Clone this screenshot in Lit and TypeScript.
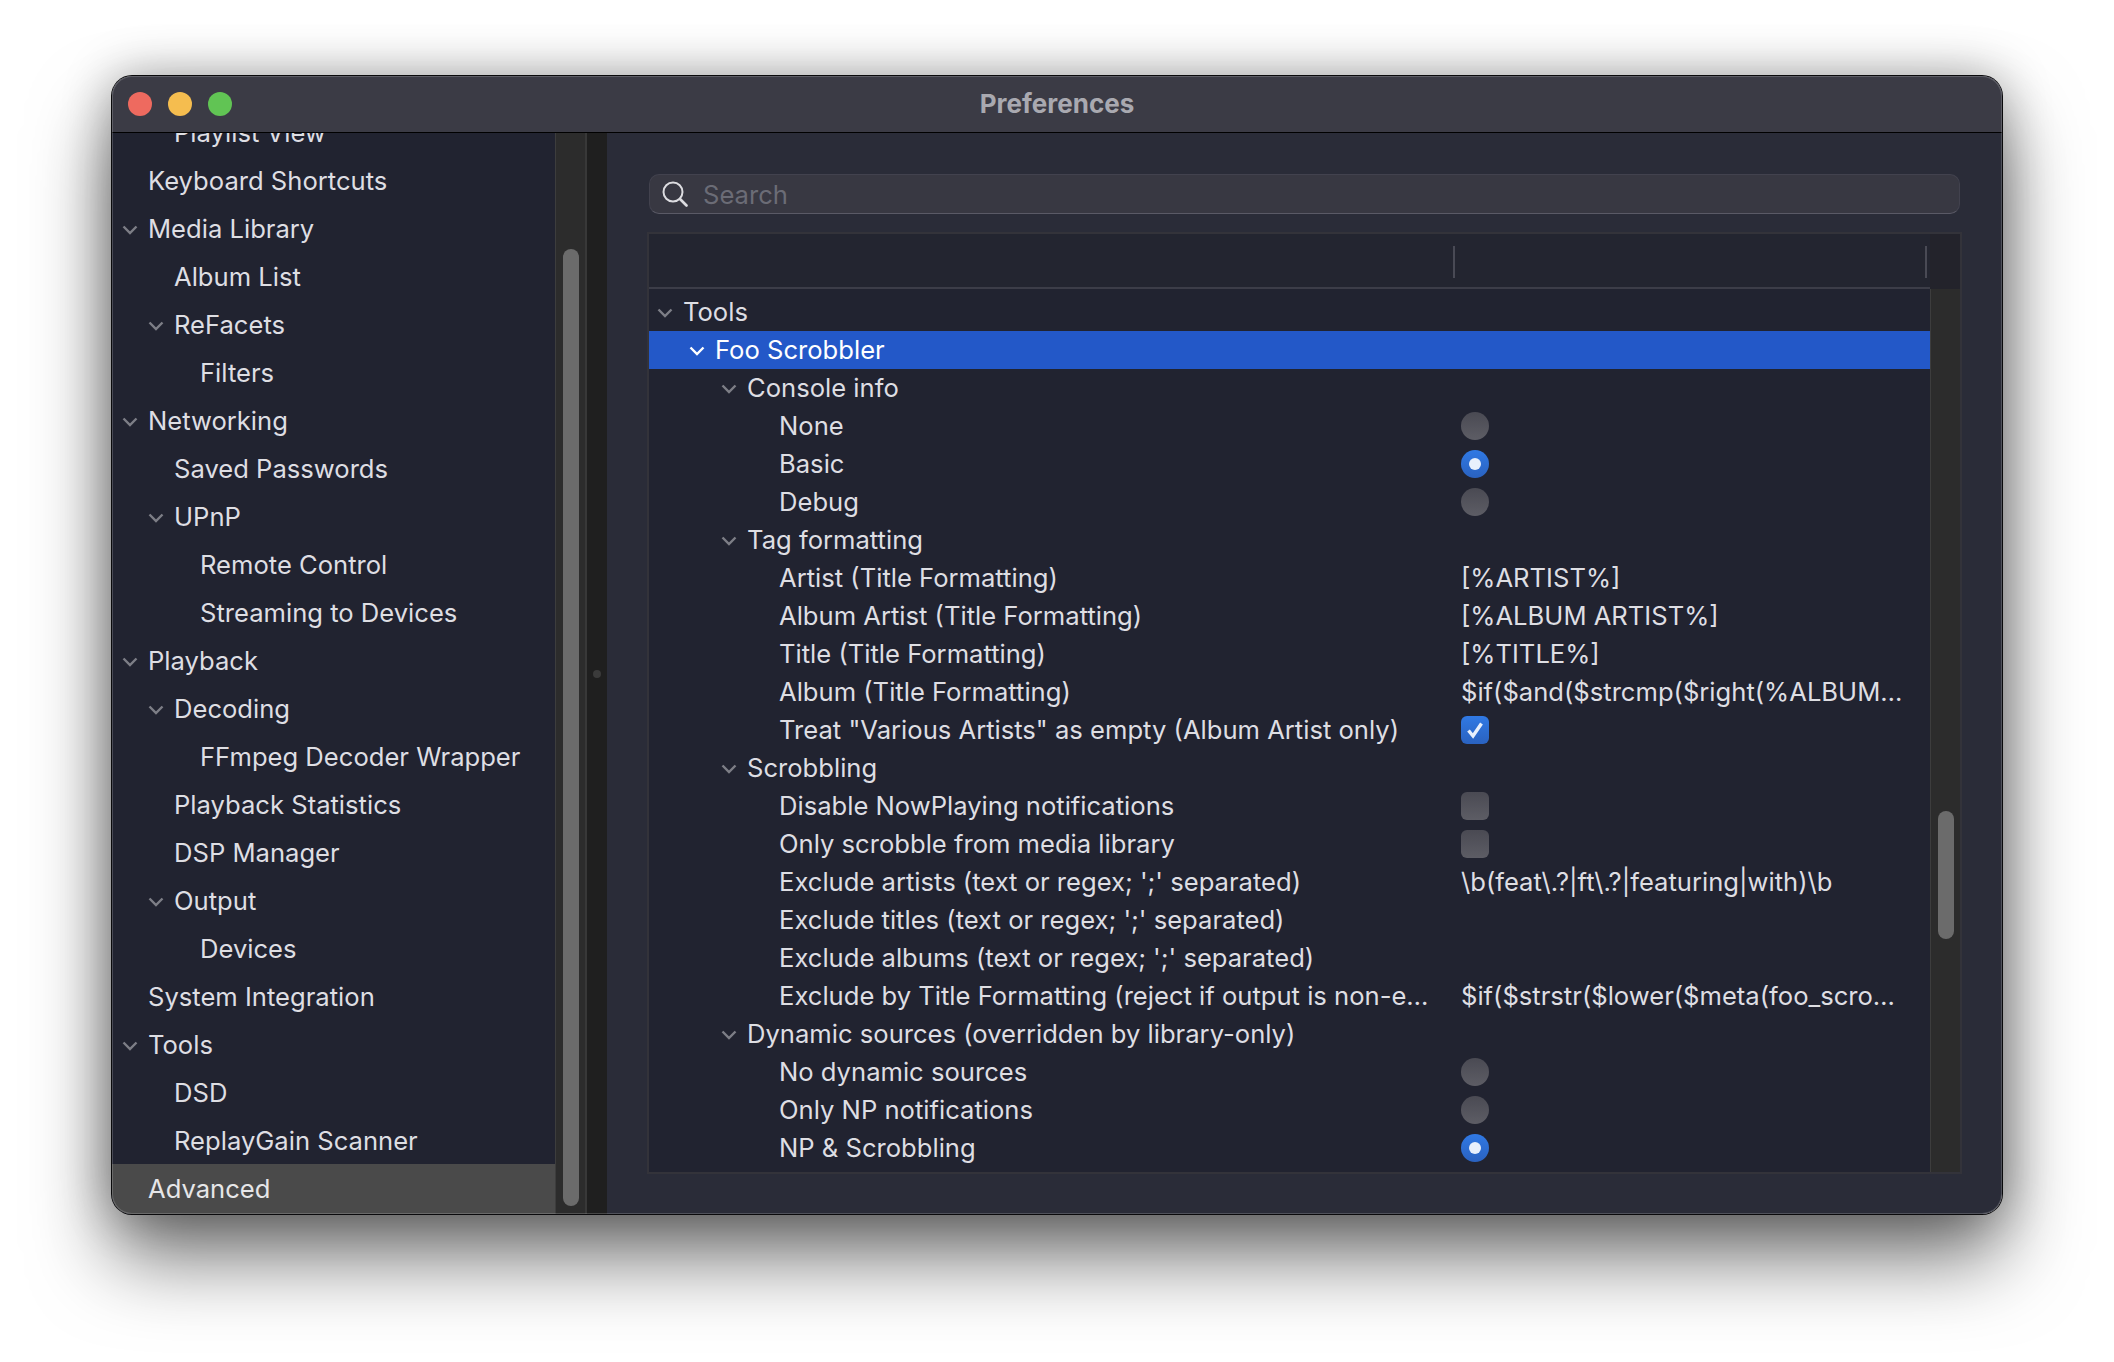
import { LitElement, html, css, svg } from "lit";
import { customElement } from "lit/decorators.js";

type Side = [string, number, boolean];
const sideRows: Side[] = [
  ["Playlist View", 1, false],
  ["Keyboard Shortcuts", 0, false],
  ["Media Library", 0, true],
  ["Album List", 1, false],
  ["ReFacets", 1, true],
  ["Filters", 2, false],
  ["Networking", 0, true],
  ["Saved Passwords", 1, false],
  ["UPnP", 1, true],
  ["Remote Control", 2, false],
  ["Streaming to Devices", 2, false],
  ["Playback", 0, true],
  ["Decoding", 1, true],
  ["FFmpeg Decoder Wrapper", 2, false],
  ["Playback Statistics", 1, false],
  ["DSP Manager", 1, false],
  ["Output", 1, true],
  ["Devices", 2, false],
  ["System Integration", 0, false],
  ["Tools", 0, true],
  ["DSD", 1, false],
  ["ReplayGain Scanner", 1, false],
];

interface TreeRow { t: string; d: number; c?: boolean; v?: string; k?: "r" | "R" | "x" | "X"; sel?: boolean }
const treeRows: TreeRow[] = [
  { t: "Tools", d: 0, c: true },
  { t: "Foo Scrobbler", d: 1, c: true, sel: true },
  { t: "Console info", d: 2, c: true },
  { t: "None", d: 3, k: "r" },
  { t: "Basic", d: 3, k: "R" },
  { t: "Debug", d: 3, k: "r" },
  { t: "Tag formatting", d: 2, c: true },
  { t: "Artist (Title Formatting)", d: 3, v: "[%ARTIST%]" },
  { t: "Album Artist (Title Formatting)", d: 3, v: "[%ALBUM ARTIST%]" },
  { t: "Title (Title Formatting)", d: 3, v: "[%TITLE%]" },
  { t: "Album (Title Formatting)", d: 3, v: "$if($and($strcmp($right(%ALBUM…" },
  { t: 'Treat "Various Artists" as empty (Album Artist only)', d: 3, k: "X" },
  { t: "Scrobbling", d: 2, c: true },
  { t: "Disable NowPlaying notifications", d: 3, k: "x" },
  { t: "Only scrobble from media library", d: 3, k: "x" },
  { t: "Exclude artists (text or regex; ';' separated)", d: 3, v: "\\b(feat\\.?|ft\\.?|featuring|with)\\b" },
  { t: "Exclude titles (text or regex; ';' separated)", d: 3 },
  { t: "Exclude albums (text or regex; ';' separated)", d: 3 },
  { t: "Exclude by Title Formatting (reject if output is non-e…", d: 3, v: "$if($strstr($lower($meta(foo_scro…" },
  { t: "Dynamic sources (overridden by library-only)", d: 2, c: true },
  { t: "No dynamic sources", d: 3, k: "r" },
  { t: "Only NP notifications", d: 3, k: "r" },
  { t: "NP & Scrobbling", d: 3, k: "R" },
];

const chevron = svg`<path d="M1.5 1.5 L8 8 L14.5 1.5" fill="none" stroke="currentColor" stroke-width="2.4"/>`;

@customElement("app-root")
export class AppRoot extends LitElement {
  static styles = css`
    :host {
      display: block;
      width: 2114px;
      height: 1362px;
      background: #fff;
      overflow: hidden;
      padding: 76px 0 0 112px;
      box-sizing: border-box;
      font-family: Inter, "Liberation Sans", sans-serif;
      font-size: 25.6px;
      color: #dedee3;
    }
    .window {
      width: 1890px;
      height: 1138px;
      border-radius: 20px;
      overflow: hidden;
      display: flex;
      flex-direction: column;
      background: #2a2c38;
    }
    .frame {
      position: relative;
      width: 1890px;
      height: 1138px;
      border-radius: 20px;
      box-shadow: 0 0 0 1px #0a0a0c, 0 44px 80px rgba(0, 0, 0, 0.55), 0 0 50px rgba(0, 0, 0, 0.32);
    }
    .frame::after {
      content: "";
      position: absolute;
      inset: 0;
      border-radius: 20px;
      box-shadow: inset 0 0 0 1px rgba(255, 255, 255, 0.18);
      pointer-events: none;
    }
    .titlebar {
      flex: 0 0 56px;
      background: #3b3b45;
      border-bottom: 1px solid #000;
      display: flex;
      align-items: center;
      padding-left: 16px;
      position: relative;
    }
    .light { width: 24px; height: 24px; border-radius: 50%; margin-right: 16px; }
    .red { background: #ee6a5f; }
    .yellow { background: #f5bd4f; }
    .green { background: #61c454; }
    .title {
      position: absolute;
      left: 0;
      right: 0;
      top: 12px;
      text-align: center;
      font-weight: 700;
      font-size: 26px;
      line-height: 32px;
      color: #a9a9b0;
    }
    .body { flex: 1; display: flex; min-height: 0; }
    .sidebar {
      flex: 0 0 443px;
      background: #212330;
      overflow: hidden;
      display: flex;
      flex-direction: column;
    }
    .side-list { margin-top: -24px; flex: 1; display: flex; flex-direction: column; }
    .side-row {
      flex: 0 0 48px;
      display: flex;
      align-items: center;
      white-space: nowrap;
      box-sizing: border-box;
      padding-bottom: 2px;
    }
    .advanced { flex: 1 0 48px; background: #4a4a4a; color: #e6e6e8; margin-top: -1px; }
    .chev { flex: 0 0 16px; width: 16px; height: 10px; color: #7d7e86; margin: 3px 10px 0 1px; }
    .spacer { flex: 0 0 27px; }
    .sel .chev { color: #fff; }
    .sb {
      flex: 0 0 32px;
      box-sizing: border-box;
      background: #2c2c2c;
      border-left: 1px solid #3d3d3d;
      border-right: 2px solid #383838;
      padding: 116px 0 8px 7px;
    }
    .thumb { width: 15.5px; height: 100%; border-radius: 8px; background: #6b6b6b; }
    .split {
      flex: 0 0 20px;
      background: #1f1f1f;
      display: flex;
      align-items: center;
      justify-content: center;
    }
    .dot { width: 8px; height: 8px; border-radius: 50%; background: #3b3b3b; }
    .pane {
      flex: 1;
      min-width: 0;
      padding: 41px 40px 40px 40px;
      display: flex;
      flex-direction: column;
    }
    .search {
      flex: 0 0 40px;
      margin: 0 2px 18px 2px;
      box-sizing: border-box;
      background: #383842;
      border: 1px solid #42424e;
      border-bottom-color: #5a5a66;
      border-radius: 10px;
      display: flex;
      align-items: center;
      padding: 1px 0 0 12px;
      color: #6b6c76;
    }
    .search svg { width: 26px; height: 26px; margin: -1px 15px 0 0; }
    .table {
      flex: 1;
      min-height: 0;
      border: 2px solid #33333a;
      display: flex;
      flex-direction: column;
    }
    .thead { flex: 0 0 55px; display: flex; }
    .thead-main {
      flex: 1;
      background: #232530;
      border-bottom: 2px solid #3c3d48;
      display: flex;
      align-items: center;
      padding-top: 2px;
    }
    .col { height: 32px; width: 2px; background: #494a55; }
    .col1 { margin-left: 804px; }
    .col2 { margin-left: auto; margin-right: 3px; }
    .corner { flex: 0 0 30px; background: #23232b; }
    .tbody { flex: 1; min-height: 0; display: flex; }
    .rows { flex: 1; min-width: 0; background: #212330; padding-top: 4px; overflow: hidden; }
    .row { height: 38px; display: flex; align-items: center; white-space: nowrap; }
    .row.sel { background: #2358c8; color: #fff; }
    .name { flex: 0 0 812px; box-sizing: border-box; display: flex; align-items: center; padding-bottom: 2px; }
    .val { display: flex; align-items: center; }
    .val.txt { padding-bottom: 2px; }
    .radio, .check {
      width: 28px;
      height: 28px;
      box-sizing: border-box;
      background: linear-gradient(#4a4a53, #5d5d65);
      display: flex;
      align-items: center;
      justify-content: center;
    }
    .radio { border-radius: 50%; }
    .check { border-radius: 6px; }
    .radio.on, .check.on { background: linear-gradient(#3079e4, #2a62c0); }
    .pip { width: 12px; height: 12px; border-radius: 50%; background: #e8f0fc; }
    .check svg { width: 22px; height: 22px; }
    .tsb {
      flex: 0 0 30px;
      box-sizing: border-box;
      background: #2c2c2c;
      border-left: 1px solid #3d3d3d;
      padding: 522px 0 0 7px;
    }
    .tthumb { width: 15.5px; height: 128px; border-radius: 8px; background: #6b6b6b; }
  `;

  private renderControl(r: TreeRow) {
    if (r.k === "r") return html`<div class="radio"></div>`;
    if (r.k === "R") return html`<div class="radio on"><div class="pip"></div></div>`;
    if (r.k === "x") return html`<div class="check"></div>`;
    if (r.k === "X")
      return html`<div class="check on">
        <svg viewBox="0 0 22 22"><path d="M4.5 11.5 L9 17 L17.5 4.5" fill="none" stroke="#e8f0fc" stroke-width="3.4" /></svg>
      </div>`;
    return r.v ?? "";
  }

  render() {
    return html`
      <div class="frame">
        <div class="window">
          <div class="titlebar">
            <div class="light red"></div>
            <div class="light yellow"></div>
            <div class="light green"></div>
            <div class="title">Preferences</div>
          </div>
          <div class="body">
            <div class="sidebar">
              <div class="side-list">
                ${sideRows.map(
                  ([t, d, c]) => html`<div class="side-row" style="padding-left:${9 + d * 26}px">
                    ${c ? html`<svg class="chev" viewBox="0 0 16 10">${chevron}</svg>` : html`<span class="spacer"></span>`}${t}
                  </div>`
                )}
                <div class="side-row advanced" style="padding-left:9px"><span class="spacer"></span>Advanced</div>
              </div>
            </div>
            <div class="sb"><div class="thumb"></div></div>
            <div class="split"><div class="dot"></div></div>
            <div class="pane">
              <div class="search">
                <svg viewBox="0 0 26 26">
                  <circle cx="11" cy="11" r="9.5" fill="none" stroke="#dcdce0" stroke-width="2" />
                  <path d="M18 18 L24.5 24.5" stroke="#dcdce0" stroke-width="2.6" stroke-linecap="round" />
                </svg>
                Search
              </div>
              <div class="table">
                <div class="thead">
                  <div class="thead-main"><div class="col col1"></div><div class="col col2"></div></div>
                  <div class="corner"></div>
                </div>
                <div class="tbody">
                  <div class="rows">
                    ${treeRows.map(
                      (r) => html`<div class="row ${r.sel ? "sel" : ""}">
                        <div class="name" style="padding-left:${7 + r.d * 32}px">
                          ${r.c ? html`<svg class="chev" viewBox="0 0 16 10">${chevron}</svg>` : html`<span class="spacer"></span>`}${r.t}
                        </div>
                        <div class="val ${r.v ? "txt" : ""}">${this.renderControl(r)}</div>
                      </div>`
                    )}
                  </div>
                  <div class="tsb"><div class="tthumb"></div></div>
                </div>
              </div>
            </div>
          </div>
        </div>
      </div>
    `;
  }
}
